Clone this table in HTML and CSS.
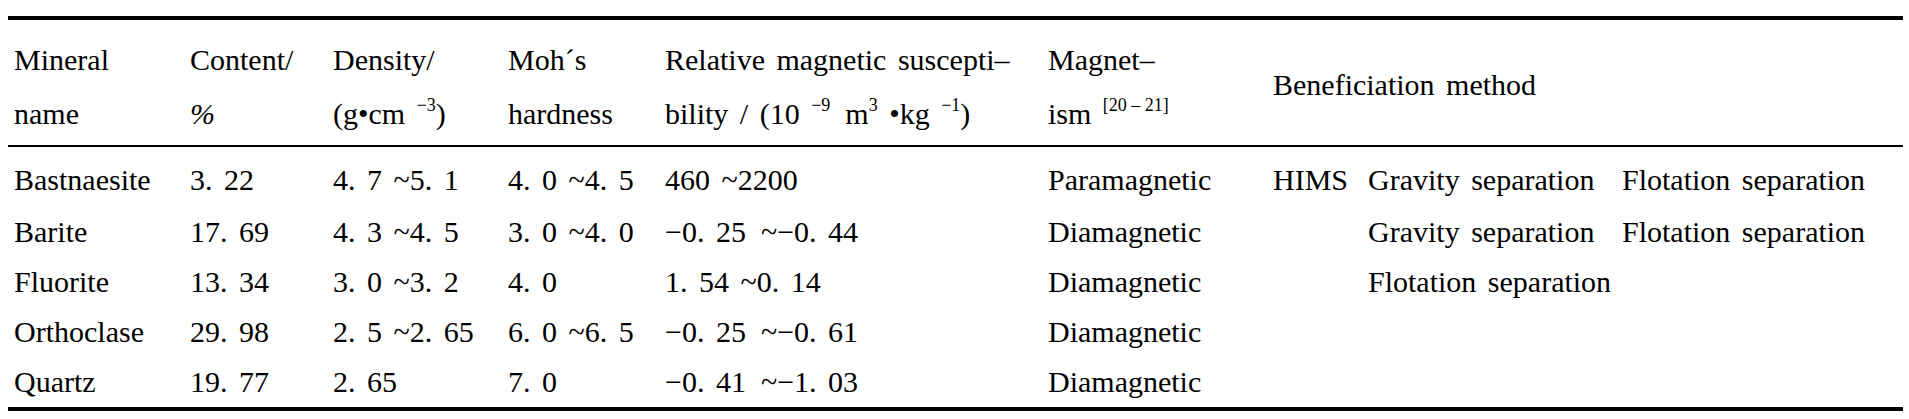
FILE: index.html
```html
<!DOCTYPE html>
<html lang="en">
<head>
    <meta charset="UTF-8">
    <meta name="viewport" content="width=device-width, initial-scale=1.0">
    <title>Mineral properties</title>
    <link rel="stylesheet" href="styles.css">
</head>
<body>
    <table class="minerals">
        <colgroup>
            <col class="c-name">
            <col class="c-content">
            <col class="c-density">
            <col class="c-hard">
            <col class="c-sus">
            <col class="c-mag">
            <col class="c-m1">
            <col class="c-m2">
            <col class="c-m3">
        </colgroup>
        <thead>
            <tr class="head-top">
                <th>Mineral</th>
                <th>Content/</th>
                <th>Density/</th>
                <th>Moh&acute;s</th>
                <th>Relative magnetic suscepti&ndash;</th>
                <th>Magnet&ndash;</th>
                <th class="method" colspan="3" rowspan="2">Beneficiation method</th>
            </tr>
            <tr class="head-bottom">
                <th>name</th>
                <th><i>%</i></th>
                <th>(g&bull;cm <sup>&minus;3</sup>)</th>
                <th>hardness</th>
                <th>bility / (10 <sup>&minus;9</sup>&ensp;m<sup>3</sup> &bull;kg <sup>&minus;1</sup>)</th>
                <th>ism <sup>[20 &ndash; 21]</sup></th>
            </tr>
        </thead>
        <tbody>
            <tr>
                <td>Bastnaesite</td>
                <td>3. 22</td>
                <td>4. 7 ~5. 1</td>
                <td>4. 0 ~4. 5</td>
                <td>460 ~2200</td>
                <td>Paramagnetic</td>
                <td>HIMS</td>
                <td>Gravity separation</td>
                <td>Flotation separation</td>
            </tr>
            <tr>
                <td>Barite</td>
                <td>17. 69</td>
                <td>4. 3 ~4. 5</td>
                <td>3. 0 ~4. 0</td>
                <td>&minus;0. 25&ensp;~&minus;0. 44</td>
                <td>Diamagnetic</td>
                <td></td>
                <td>Gravity separation</td>
                <td>Flotation separation</td>
            </tr>
            <tr>
                <td>Fluorite</td>
                <td>13. 34</td>
                <td>3. 0 ~3. 2</td>
                <td>4. 0</td>
                <td>1. 54 ~0. 14</td>
                <td>Diamagnetic</td>
                <td></td>
                <td>Flotation separation</td>
                <td></td>
            </tr>
            <tr>
                <td>Orthoclase</td>
                <td>29. 98</td>
                <td>2. 5 ~2. 65</td>
                <td>6. 0 ~6. 5</td>
                <td>&minus;0. 25&ensp;~&minus;0. 61</td>
                <td>Diamagnetic</td>
                <td></td>
                <td></td>
                <td></td>
            </tr>
            <tr>
                <td>Quartz</td>
                <td>19. 77</td>
                <td>2. 65</td>
                <td>7. 0</td>
                <td>&minus;0. 41&ensp;~&minus;1. 03</td>
                <td>Diamagnetic</td>
                <td></td>
                <td></td>
                <td></td>
            </tr>
        </tbody>
    </table>
</body>
</html>
```

FILE: styles.css
```css
body {
    margin: 0;
    padding: 0;
    background: #ffffff;
    color: #000000;
}

.minerals {
    margin: 16px 0 0 8px;
    width: 1895px;
    table-layout: fixed;
    border-collapse: separate;
    border-spacing: 0;
    font-family: "Liberation Serif", "DejaVu Serif", serif;
    font-size: 30px;
    line-height: 36px;
    word-spacing: 4px;
}

.c-name { width: 176px; }
.c-content { width: 143px; }
.c-density { width: 175px; }
.c-hard { width: 157px; }
.c-sus { width: 383px; }
.c-mag { width: 225px; }
.c-m1 { width: 95px; }
.c-m2 { width: 254px; }
.c-m3 { width: 287px; }

th,
td {
    padding: 7px 6px;
    text-align: left;
    font-family: inherit;
    font-weight: normal;
    white-space: nowrap;
    vertical-align: top;
}

.head-top th {
    border-top: 4px solid #000;
    padding-top: 22px;
    padding-bottom: 0;
}

.head-bottom th {
    border-bottom: 2px solid #000;
    padding-top: 18px;
    padding-bottom: 13px;
}

.head-top th.method {
    border-bottom: 2px solid #000;
    vertical-align: middle;
    padding-top: 5px;
    padding-bottom: 0;
}

sup {
    font-size: 60%;
    line-height: 0;
    vertical-align: 0.7em;
    word-spacing: 0;
}

tbody tr:first-child td {
    padding-top: 15px;
    padding-bottom: 9px;
}

tbody tr:last-child td {
    border-bottom: 4px solid #000;
}
```
